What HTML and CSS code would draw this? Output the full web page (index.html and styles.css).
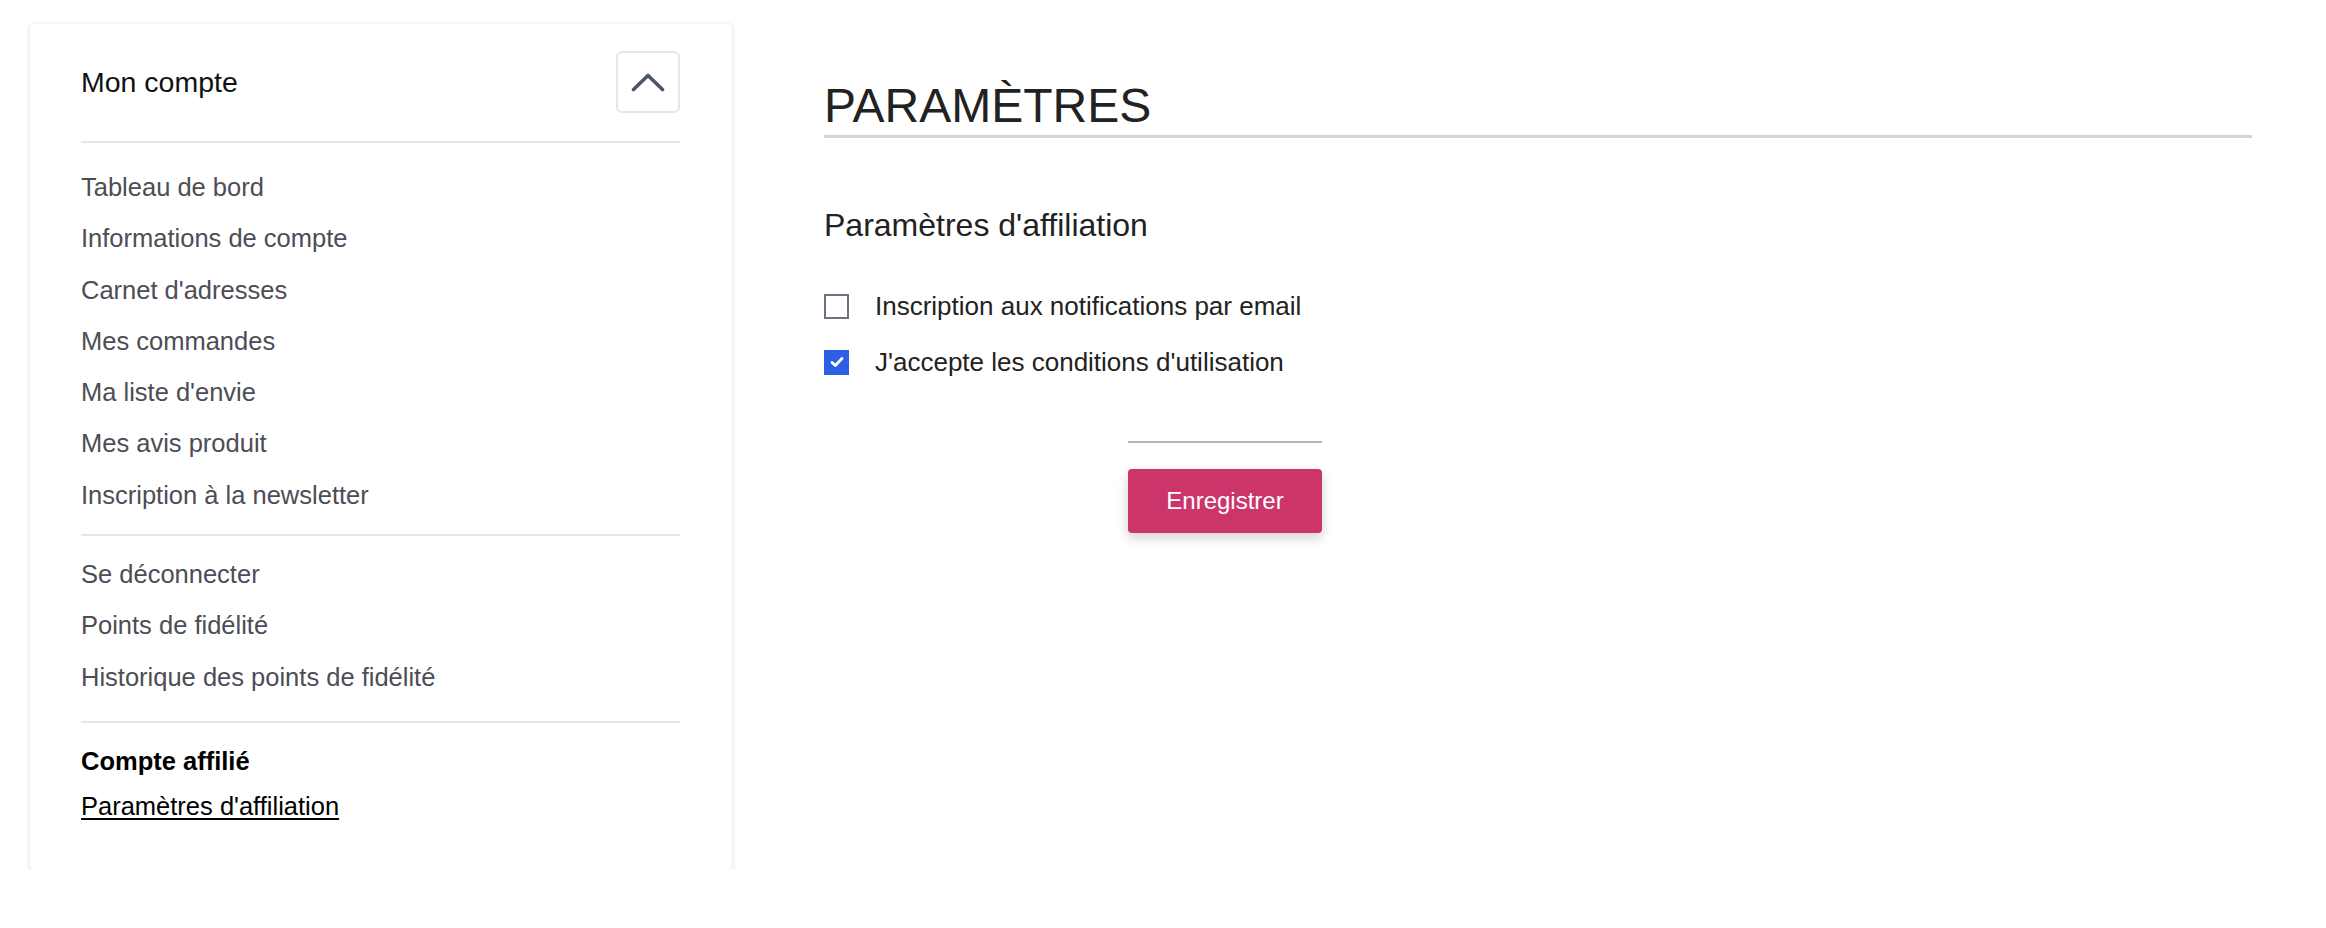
FILE: index.html
```html
<!DOCTYPE html>
<html lang="fr">
<head>
    <meta charset="UTF-8">
    <meta name="viewport" content="width=device-width, initial-scale=1.0">
    <title>Paramètres d'affiliation</title>
    <link rel="stylesheet" href="styles.css">
</head>
<body>

<div class="page">
    <!-- Menu du compte -->
    <aside class="account-nav">
        <div class="nav-header">
            <span class="nav-title">Mon compte</span>
            <button type="button" class="nav-toggle" aria-label="Réduire">
                <svg width="34" height="20" viewBox="0 0 34 20">
                    <path d="M2.5 17.5 L17 3.5 L31.5 17.5" fill="none" stroke="#4b5563" stroke-width="3.6" stroke-linecap="round" stroke-linejoin="round"/>
                </svg>
            </button>
        </div>

        <ul class="nav-group group-main">
            <li><a href="#">Tableau de bord</a></li>
            <li><a href="#">Informations de compte</a></li>
            <li><a href="#">Carnet d'adresses</a></li>
            <li><a href="#">Mes commandes</a></li>
            <li><a href="#">Ma liste d'envie</a></li>
            <li><a href="#">Mes avis produit</a></li>
            <li><a href="#">Inscription à la newsletter</a></li>
        </ul>

        <ul class="nav-group group-loyalty">
            <li><a href="#">Se déconnecter</a></li>
            <li><a href="#">Points de fidélité</a></li>
            <li><a href="#">Historique des points de fidélité</a></li>
        </ul>

        <div class="nav-group group-affiliate">
            <div class="group-title">Compte affilié</div>
            <a href="#" class="current">Paramètres d'affiliation</a>
        </div>
    </aside>

    <!-- Contenu -->
    <main class="content">
        <h1 class="page-title">PARAMÈTRES</h1>

        <h2 class="section-title">Paramètres d'affiliation</h2>

        <form class="settings-form">
            <label class="check-row">
                <span class="check-box"></span>
                <span>Inscription aux notifications par email</span>
            </label>
            <label class="check-row">
                <span class="check-box checked">
                    <svg width="14" height="12" viewBox="0 0 14 12">
                        <path d="M2 6.5 L5.3 9.5 L12 2.5" fill="none" stroke="#fff" stroke-width="2.8" stroke-linecap="round" stroke-linejoin="round"/>
                    </svg>
                </span>
                <span>J'accepte les conditions d'utilisation</span>
            </label>

            <div class="actions">
                <button type="button" class="btn-save">Enregistrer</button>
            </div>
        </form>
    </main>
</div>

</body>
</html>
```

FILE: styles.css
```css
body {
    margin: 0;
    padding: 0;
    font-family: "Liberation Sans", Arial, sans-serif;
    background-color: #fff;
    color: #222;
}

.page {
    display: flex;
    align-items: flex-start;
    padding: 24px 74px 0 30px;
}

/* Menu du compte */
.account-nav {
    width: 702px;
    box-sizing: border-box;
    flex-shrink: 0;
    padding: 27px 52px 41px 51px;
    background: #fff;
    border-radius: 4px;
    box-shadow: 0 1px 5px rgba(0, 0, 0, 0.15);
}

.nav-header {
    display: flex;
    justify-content: space-between;
    align-items: center;
    padding-bottom: 28px;
    border-bottom: 2px solid #e6e6e6;
}

.nav-title {
    font-size: 28.5px;
    color: #111;
}

.nav-toggle {
    width: 64px;
    height: 62px;
    display: flex;
    align-items: center;
    justify-content: center;
    background: #fff;
    border: 2px solid #e6e6e6;
    border-radius: 6px;
    padding: 0;
    cursor: pointer;
}

.nav-group {
    list-style: none;
    margin: 0;
    font-size: 25.5px;
}

.nav-group li {
    line-height: 51.3px;
}

.nav-group a {
    color: #4d4d55;
    text-decoration: none;
}

.group-main {
    padding: 19px 0 13px;
    border-bottom: 2px solid #e6e6e6;
}

.group-loyalty {
    padding: 13px 0 18px;
    border-bottom: 2px solid #e6e6e6;
}

.group-affiliate {
    padding-top: 16px;
}

.group-affiliate .group-title {
    font-weight: bold;
    color: #000;
    line-height: 44px;
}

.group-affiliate a.current {
    display: inline-block;
    margin-top: 1px;
    line-height: 44px;
    color: #000;
    text-decoration: underline;
    text-underline-offset: 3px;
}

/* Contenu */
.content {
    flex: 1;
    margin-left: 92px;
    padding-top: 53px;
}

.page-title {
    margin: 0;
    font-size: 48px;
    font-weight: normal;
    line-height: 57.5px;
    color: #222;
    border-bottom: 3.5px solid #d1d5db;
}

.section-title {
    margin: 68px 0 0;
    font-size: 32px;
    font-weight: normal;
    line-height: 38.5px;
    color: #222;
}

.settings-form {
    margin-top: 44px;
}

.check-row {
    display: flex;
    align-items: center;
    gap: 26px;
    height: 36px;
    margin-bottom: 20px;
    font-size: 26px;
    color: #222;
    cursor: pointer;
}

.check-box {
    width: 25px;
    height: 25px;
    box-sizing: border-box;
    border: 2.5px solid #6b7280;
    display: flex;
    align-items: center;
    justify-content: center;
    flex-shrink: 0;
}

.check-box.checked {
    background-color: #2d5fe4;
    border-color: #2d5fe4;
}

.actions {
    margin: 61px 0 0 304px;
    width: 194px;
    padding-top: 26px;
    border-top: 2px solid #b3b3b3;
}

.btn-save {
    width: 194px;
    height: 64px;
    background-color: #cb3569;
    color: #fff;
    border: none;
    border-radius: 4px;
    font-family: "Liberation Sans", Arial, sans-serif;
    font-size: 24px;
    cursor: pointer;
    box-shadow: 0 5px 12px rgba(0, 0, 0, 0.18);
}

.btn-save:hover {
    background-color: #b82d5d;
}
```
